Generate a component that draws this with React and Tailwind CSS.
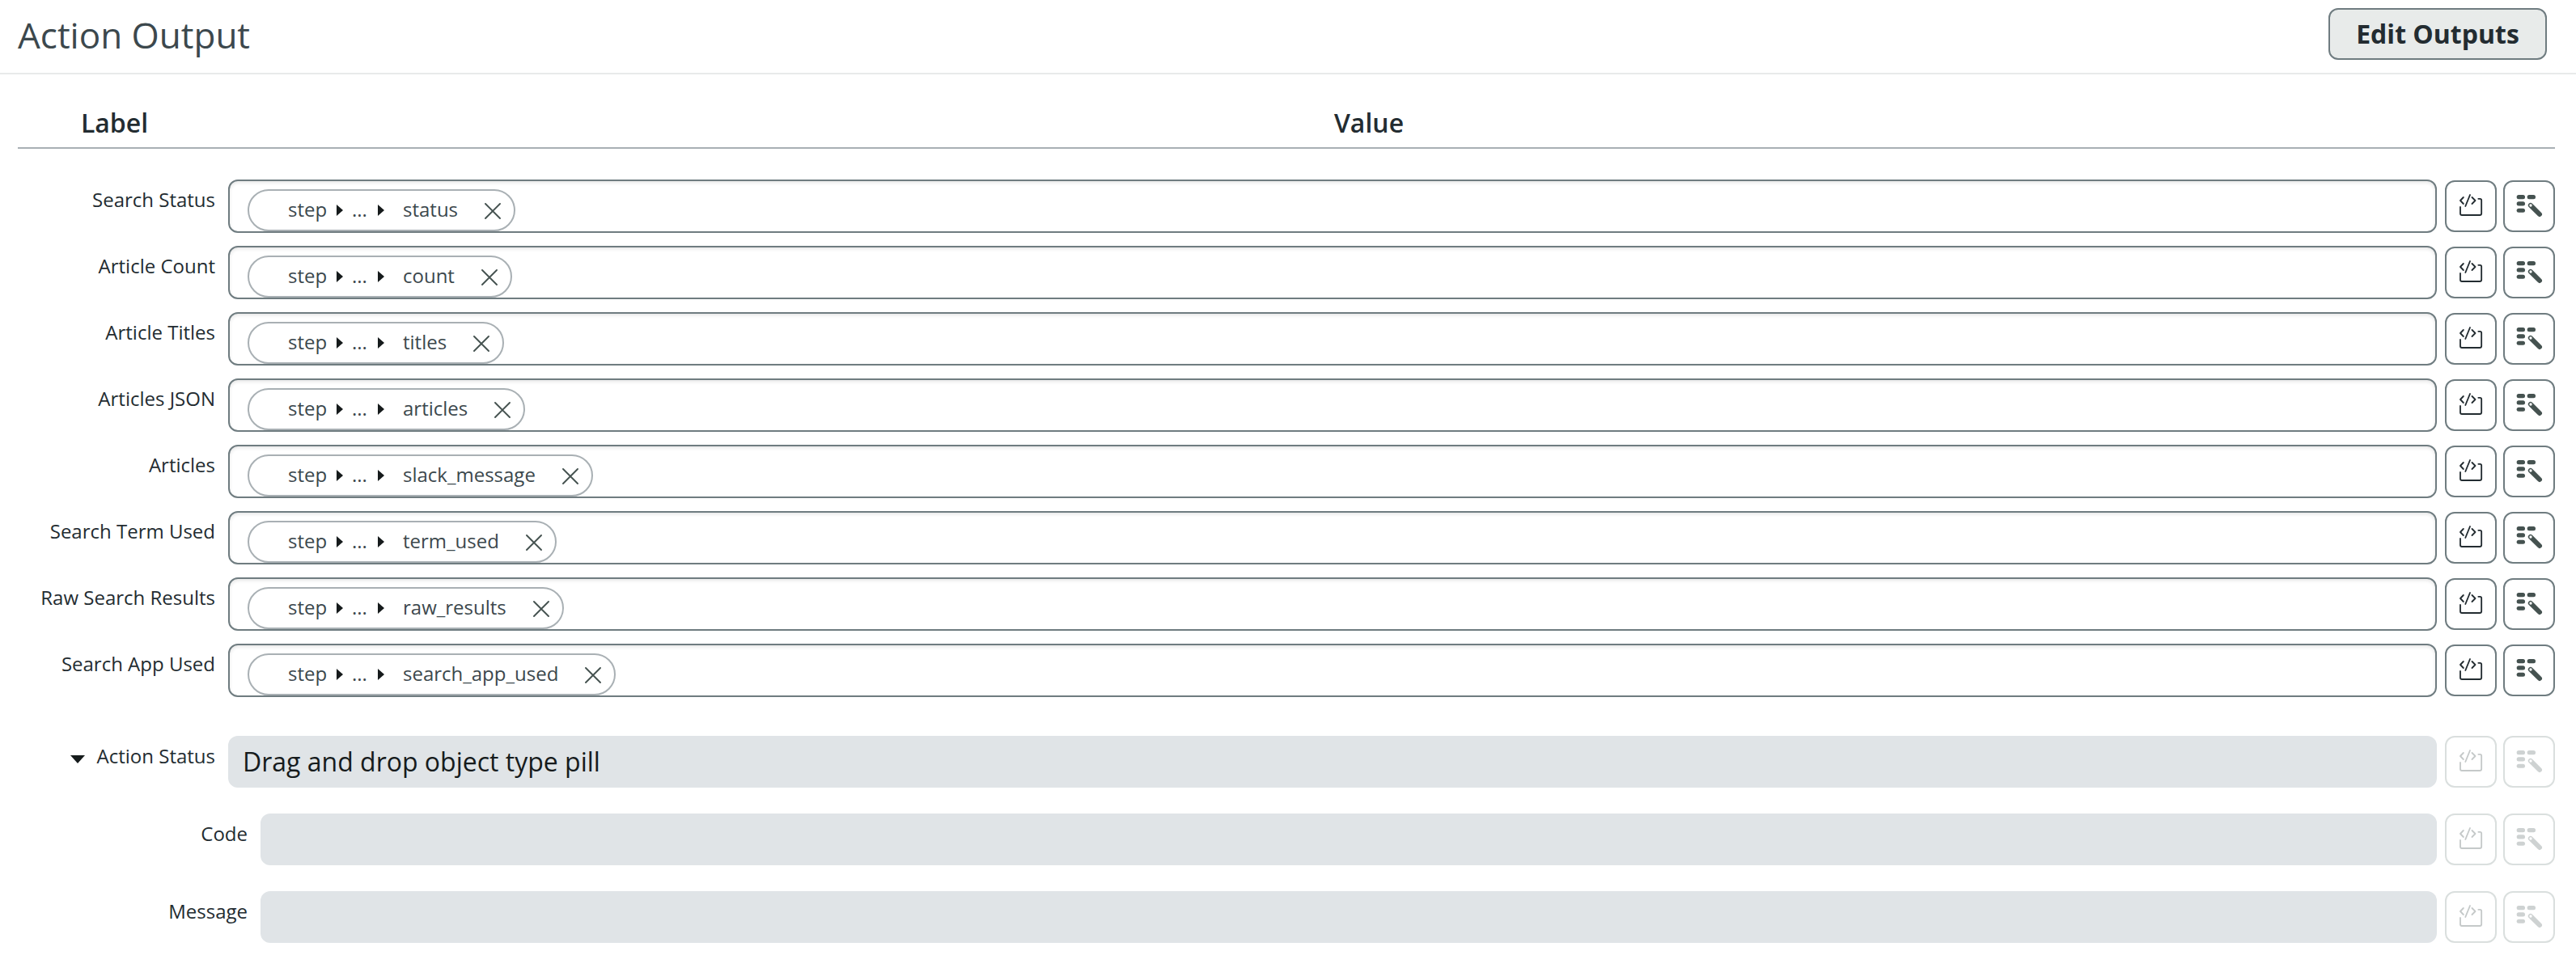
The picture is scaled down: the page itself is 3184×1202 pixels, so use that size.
const FIELDS = [
  ['Search Status', 'status'],
  ['Article Count', 'count'],
  ['Article Titles', 'titles'],
  ['Articles JSON', 'articles'],
  ['Articles', 'slack_message'],
  ['Search Term Used', 'term_used'],
  ['Raw Search Results', 'raw_results'],
  ['Search App Used', 'search_app_used'],
];

function ScriptIcon() {
  return (
    <svg viewBox="72 45 180 180" className="size-[60px]" fill="none" stroke="currentColor" strokeWidth="5.5" strokeLinecap="round" strokeLinejoin="round">
      <path d="M134.500 102 L123 114 L134.500 126" />
      <path d="M159 93 L142 135" />
      <path d="M166.500 102 L178.500 114 L166.500 126" />
      <path d="M123 138 V162 Q123 168 129 168 H195 Q201.500 168 201.500 162 V113 Q201.500 107.500 196 107.500 H190" />
    </svg>
  );
}

function TransformIcon() {
  return (
    <svg viewBox="288 45 180 180" className="size-[60px]">
      <g fill="currentColor">
        <rect x="332" y="93" width="31" height="15.500" rx="7.500" />
        <rect x="371" y="93" width="31" height="15.500" rx="7.500" />
        <rect x="332" y="118" width="31" height="15.500" rx="7.500" />
        <rect x="332" y="143" width="31" height="15.500" rx="7.500" />
      </g>
      <path d="M383.500 131.500 L417 165" stroke="currentColor" strokeWidth="18" strokeLinecap="round" />
      <circle cx="384" cy="132" r="5" fill="white" />
    </svg>
  );
}

function RowActions({ disabled }) {
  const border = disabled ? 'border-[#dadfde]' : 'border-[#6f7c80]';
  return (
    <div className="ml-2.5 flex gap-2">
      <button className={`flex size-16 items-center justify-center rounded-xl border-2 bg-white ${border} ${disabled ? 'text-[#c5c9c9]' : 'text-[#232c31]'}`}>
        <ScriptIcon />
      </button>
      <button className={`flex size-16 items-center justify-center rounded-xl border-2 bg-white ${border} ${disabled ? 'text-[#ced2d2]' : 'text-[#455250]'}`}>
        <TransformIcon />
      </button>
    </div>
  );
}

function Arrow() {
  return (
    <svg viewBox="0 0 8 14" className="h-3.5 w-2 shrink-0" fill="#161b1c">
      <path d="M0 0 L8 7 L0 14 Z" />
    </svg>
  );
}

function DataPill({ name }) {
  return (
    <div className="flex h-[52px] items-center rounded-full border-2 border-[#a9b0b4] bg-white pr-4 pl-12 text-2xl leading-9 text-[#3c484d]">
      <span className="-mt-0.5 w-[60px]">step</span>
      <Arrow />
      <span className="-mt-0.5 w-[43px] pl-[11px]">...</span>
      <Arrow />
      <span className="-mt-0.5 ml-[23px]">{name}</span>
      <svg viewBox="0 0 20 20" className="mt-0.5 ml-[33px] size-5 shrink-0" fill="none" stroke="#455250" strokeWidth="1.900" strokeLinecap="round">
        <path d="M1 1 L19 19 M19 1 L1 19" />
      </svg>
    </div>
  );
}

function FieldRow({ label, name }) {
  return (
    <div className="flex h-[66px] items-center">
      <div className="w-[244px] self-start pt-[7px] text-right text-2xl leading-9 whitespace-nowrap text-[#232c31]">{label}</div>
      <div className="ml-4 flex h-[66px] flex-1 items-end rounded-xl border-2 border-[#6f7c80] bg-white pl-[22px] shadow-[inset_0_2px_4px_rgba(0,0,0,0.1)]">
        <DataPill name={name} />
      </div>
      <RowActions />
    </div>
  );
}

function DisabledRow({ label, placeholder, nested, expandable }) {
  return (
    <div className="flex h-16 items-center">
      <div className={`flex items-center justify-end self-start pt-[7px] text-2xl leading-9 text-[#232c31] ${nested ? 'w-[284px]' : 'w-[244px]'}`}>
        {expandable && (
          <svg viewBox="0 0 18 10" className="mt-2 mr-[15px] h-2.5 w-[18px]" fill="#161b1c">
            <path d="M0 0 H18 L9 10 Z" />
          </svg>
        )}
        <span>{label}</span>
      </div>
      <div className="ml-4 flex h-16 flex-1 items-center rounded-xl bg-[#e0e4e7] pl-[18px] text-[32px] leading-none text-[#161b1c]">{placeholder}</div>
      <RowActions disabled />
    </div>
  );
}

export default function App() {
  return (
    <div className="h-[1202px] w-[3184px] overflow-hidden bg-white font-['Open_Sans',sans-serif]">
      <header className="flex h-[92px] items-start justify-between border-b-2 border-[#e8eaea] pr-9 pl-[22px]">
        <h1 className="pt-[13px] text-[44px] leading-[60px] text-[#3c484d]">Action Output</h1>
        <button className="mt-2.5 h-16 w-[270px] rounded-xl border-2 border-[#6f7c80] bg-[#e8ebea] text-[32px] leading-none font-bold text-[#232c31]">
          Edit Outputs
        </button>
      </header>
      <main className="pr-[26px] pl-[22px]">
        <div className="flex h-[92px] border-b-2 border-[#a9b0b4] pt-[38px] text-[32px] leading-[44px] font-semibold text-[#232c31]">
          <div className="w-[239px] text-center">Label</div>
          <div className="flex-1 pr-[35px] text-center">Value</div>
        </div>
        <div className="mt-[38px] flex flex-col gap-4">
          {FIELDS.map(([label, name]) => (
            <FieldRow key={label} label={label} name={name} />
          ))}
        </div>
        <div className="mt-12 flex flex-col gap-8">
          <DisabledRow label="Action Status" placeholder="Drag and drop object type pill" expandable />
          <DisabledRow label="Code" nested />
          <DisabledRow label="Message" nested />
        </div>
      </main>
    </div>
  );
}
